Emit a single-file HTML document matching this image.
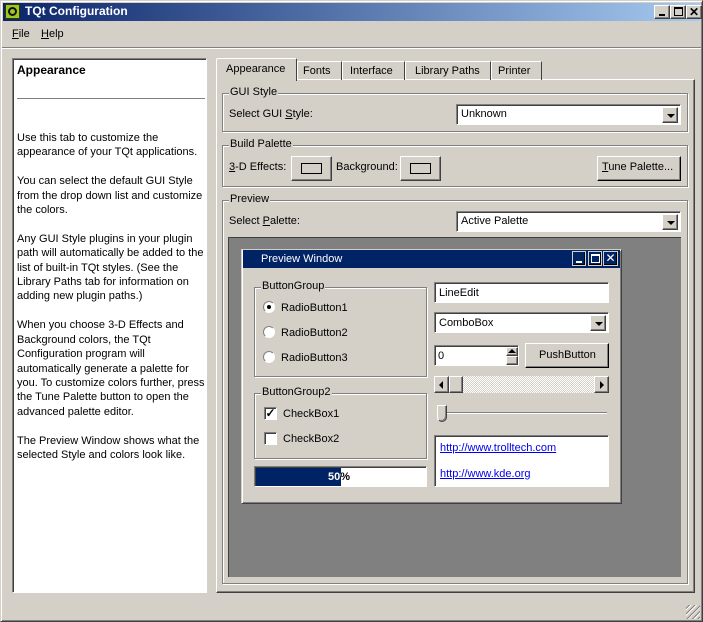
<!DOCTYPE html>
<html><head><meta charset="utf-8"><style>
*{box-sizing:border-box;margin:0;padding:0}
body{width:703px;height:622px;background:#d4d0c8;font-family:"Liberation Sans",sans-serif;font-size:11px;color:#000;position:relative;overflow:hidden}
.a{position:absolute}
.t{position:absolute;white-space:nowrap;line-height:13px}
.sunk{border:1px solid;border-color:#808080 #fff #fff #808080;box-shadow:inset 1px 1px 0 #404040}
.rais{border:1px solid;border-color:#fff #404040 #404040 #fff;box-shadow:inset -1px -1px 0 #808080;background:#d4d0c8}
.grp{position:absolute;border:1px solid #808080;box-shadow:1px 1px 0 #fff,inset 1px 1px 0 #fff}
.grp span{position:absolute;top:-8px;left:6px;background:#d4d0c8;padding:0 1px;line-height:13px}
.cb{position:absolute;background:#fff}
.arrow{position:absolute;right:2px;top:2px;width:16px;height:16px}
.arrow:after{content:"";position:absolute;left:4px;top:6px;border-left:4px solid transparent;border-right:4px solid transparent;border-top:4px solid #000}
u{text-decoration:underline}
</style></head><body>
<div class="a" style="left:0;top:0;width:703px;height:622px;border:1px solid;border-color:#d4d0c8 #404040 #404040 #d4d0c8;box-shadow:inset 1px 1px 0 #fff,inset -1px -1px 0 #808080"></div>
<div class="a" style="left:3px;top:3px;width:697px;height:18px;background:linear-gradient(90deg,#0a246a,#a6caf0)"></div>
<div class="a" style="left:5px;top:4px;width:15px;height:15px;background:#9fc520;border:1px solid #2a3a00"></div>
<div class="a" style="left:8px;top:7px;width:9px;height:9px;border:2px solid #111;border-radius:50%"></div>
<div class="t" style="left:25px;top:5px;color:#fff;font-weight:bold;font-size:12px">TQt Configuration</div>
<div class="rais a" style="left:654px;top:5px;width:16px;height:14px"><div class="a" style="left:4px;top:8px;width:6px;height:2px;background:#000"></div></div>
<div class="rais a" style="left:670px;top:5px;width:16px;height:14px"><div class="a" style="left:3px;top:1px;width:9px;height:9px;border:1px solid #000;border-top-width:2px"></div></div>
<div class="rais a" style="left:686px;top:5px;width:16px;height:14px;text-align:center;font-weight:bold;line-height:12px;font-size:12px">✕</div>
<div class="t" style="left:12px;top:28px"><u>F</u>ile</div>
<div class="t" style="left:41px;top:28px"><u>H</u>elp</div>
<div class="a" style="left:2px;top:47px;width:699px;height:2px;border-top:1px solid #808080;border-bottom:1px solid #fff"></div>

<div class="a sunk" style="left:12px;top:58px;width:195px;height:535px;background:#fff"></div>
<div class="t" style="left:17px;top:64px;font-weight:bold;font-size:12px">Appearance</div>
<div class="a" style="left:17px;top:98px;width:188px;height:1px;background:#808080"></div>
<div class="a" style="left:17px;top:131px;width:195px;line-height:14.4px;white-space:nowrap">
Use this tab to customize the<br>appearance of your TQt applications.<br><br>
You can select the default GUI Style<br>from the drop down list and customize<br>the colors.<br><br>
Any GUI Style plugins in your plugin<br>path will automatically be added to the<br>list of built-in TQt styles. (See the<br>Library Paths tab for information on<br>adding new plugin paths.)<br><br>
When you choose 3-D Effects and<br>Background colors, the TQt<br>Configuration program will<br>automatically generate a palette for<br>you. To customize colors further, press<br>the Tune Palette button to open the<br>advanced palette editor.<br><br>
The Preview Window shows what the<br>selected Style and colors look like.</div>

<div class="a" style="left:216px;top:79px;width:479px;height:514px;border:1px solid;border-color:#fff #404040 #404040 #fff;box-shadow:inset -1px -1px 0 #808080"></div>
<div class="a" style="left:216px;top:58px;width:81px;height:23px;border:1px solid;border-color:#fff #404040 transparent #fff;border-bottom:0;background:#d4d0c8;border-radius:2px 2px 0 0"></div>
<div class="t" style="left:226px;top:63px">Appearance</div>
<div class="a" style="left:297px;top:61px;width:45px;height:19px;border:1px solid;border-color:#fff #404040 transparent #fff;border-bottom:0"></div><div class="t" style="left:303px;top:65px">Fonts</div>
<div class="a" style="left:342px;top:61px;width:63px;height:19px;border:1px solid;border-color:#fff #404040 transparent #fff;border-bottom:0"></div><div class="t" style="left:350px;top:65px">Interface</div>
<div class="a" style="left:405px;top:61px;width:86px;height:19px;border:1px solid;border-color:#fff #404040 transparent #fff;border-bottom:0"></div><div class="t" style="left:415px;top:65px">Library Paths</div>
<div class="a" style="left:491px;top:61px;width:51px;height:19px;border:1px solid;border-color:#fff #404040 transparent #fff;border-bottom:0"></div><div class="t" style="left:498px;top:65px">Printer</div>

<div class="grp" style="left:222px;top:93px;width:466px;height:39px"><span>GUI Style</span></div>
<div class="t" style="left:229px;top:108px">Select GUI <u>S</u>tyle:</div>
<div class="cb sunk" style="left:456px;top:104px;width:225px;height:21px"><div class="t" style="left:4px;top:3px">Unknown</div><div class="arrow rais"></div></div>

<div class="grp" style="left:222px;top:145px;width:466px;height:42px"><span>Build Palette</span></div>
<div class="t" style="left:229px;top:161px"><u>3</u>-D Effects:</div>
<div class="rais a" style="left:291px;top:156px;width:41px;height:25px"><div class="a" style="left:9px;top:6px;width:21px;height:11px;border:1px solid #000"></div></div>
<div class="t" style="left:336px;top:161px">Back<u>g</u>round:</div>
<div class="rais a" style="left:400px;top:156px;width:41px;height:25px"><div class="a" style="left:9px;top:6px;width:21px;height:11px;border:1px solid #000"></div></div>
<div class="rais a" style="left:597px;top:156px;width:84px;height:25px;border-color:#fff #000 #000 #fff"></div>
<div class="t" style="left:602px;top:161px"><u>T</u>une Palette...</div>

<div class="grp" style="left:222px;top:200px;width:466px;height:384px"><span>Preview</span></div>
<div class="t" style="left:229px;top:215px">Select <u>P</u>alette:</div>
<div class="cb sunk" style="left:456px;top:211px;width:225px;height:21px"><div class="t" style="left:4px;top:3px">Active Palette</div><div class="arrow rais"></div></div>
<div class="a" style="left:228px;top:237px;width:453px;height:340px;background:#808080;border-top:1px solid #404040;border-left:1px solid #404040"></div>

<div class="a" style="left:241px;top:249px;width:381px;height:255px;background:#d4d0c8;border:1px solid;border-color:#d4d0c8 #404040 #404040 #d4d0c8;box-shadow:inset 1px 1px 0 #fff,inset -1px -1px 0 #808080"></div>
<div class="a" style="left:243px;top:250px;width:377px;height:18px;background:#002366"></div>
<div class="t" style="left:261px;top:253px;color:#fff">Preview Window</div>
<div class="a" style="left:572px;top:251px;width:14px;height:15px;border:1px solid #d4d0c8;box-shadow:inset -1px -1px 0 #000"><div class="a" style="left:3px;top:9px;width:6px;height:2px;background:#fff"></div></div>
<div class="a" style="left:588px;top:251px;width:14px;height:15px;border:1px solid #d4d0c8;box-shadow:inset -1px -1px 0 #000"><div class="a" style="left:2px;top:2px;width:9px;height:9px;border:1px solid #fff;border-top-width:2px"></div></div>
<div class="a" style="left:603px;top:251px;width:15px;height:15px;border:1px solid #d4d0c8;box-shadow:inset -1px -1px 0 #000;color:#fff;text-align:center;line-height:12px;font-size:12px">✕</div>

<div class="grp" style="left:254px;top:287px;width:173px;height:90px"><span>ButtonGroup</span></div>
<div class="a" style="left:263px;top:301px;width:12px;height:12px;border-radius:50%;background:#fff;border:1px solid;border-color:#808080 #fff #fff #808080"><div class="a" style="left:3px;top:3px;width:4px;height:4px;border-radius:50%;background:#000"></div></div>
<div class="t" style="left:281px;top:302px">RadioButton1</div>
<div class="a" style="left:263px;top:326px;width:12px;height:12px;border-radius:50%;background:#fff;border:1px solid;border-color:#808080 #fff #fff #808080"></div>
<div class="t" style="left:281px;top:327px">RadioButton2</div>
<div class="a" style="left:263px;top:351px;width:12px;height:12px;border-radius:50%;background:#fff;border:1px solid;border-color:#808080 #fff #fff #808080"></div>
<div class="t" style="left:281px;top:352px">RadioButton3</div>

<div class="grp" style="left:254px;top:393px;width:173px;height:66px"><span>ButtonGroup2</span></div>
<div class="a sunk" style="left:264px;top:407px;width:13px;height:13px;background:#fff;font-size:12px;line-height:11px;text-align:center;font-weight:bold">✓</div>
<div class="t" style="left:283px;top:408px">CheckBox1</div>
<div class="a sunk" style="left:264px;top:432px;width:13px;height:13px;background:#fff"></div>
<div class="t" style="left:283px;top:433px">CheckBox2</div>

<div class="a sunk" style="left:254px;top:466px;width:173px;height:21px;background:#fff"><div class="a" style="left:1px;top:1px;width:85px;height:18px;background:#002366"></div><div class="t" style="left:73px;top:4px;font-weight:bold;color:#000">50%</div><div class="t" style="left:73px;top:4px;font-weight:bold;color:#fff;width:13px;overflow:hidden">50%</div></div>

<div class="cb sunk" style="left:434px;top:282px;width:175px;height:21px"><div class="t" style="left:4px;top:4px">LineEdit</div></div>
<div class="cb sunk" style="left:434px;top:312px;width:175px;height:21px"><div class="t" style="left:4px;top:4px">ComboBox</div><div class="arrow rais"></div></div>
<div class="cb sunk" style="left:434px;top:345px;width:85px;height:21px"><div class="t" style="left:3px;top:4px">0</div>
<div class="rais a" style="left:71px;top:1px;width:12px;height:9px"></div><div class="rais a" style="left:71px;top:10px;width:12px;height:9px"></div>
<div class="a" style="left:73px;top:3px;border-left:4px solid transparent;border-right:4px solid transparent;border-bottom:4px solid #000"></div></div>
<div class="rais a" style="left:525px;top:343px;width:84px;height:25px;border-color:#fff #000 #000 #fff"></div>
<div class="t" style="left:539px;top:349px">PushButton</div>
<div class="a" style="left:434px;top:376px;width:175px;height:17px;background:repeating-conic-gradient(#d4d0c8 0 25%,#fff 0 50%) 0 0/2px 2px"></div>
<div class="rais a" style="left:434px;top:376px;width:15px;height:17px"><div class="a" style="left:4px;top:4px;border-top:4px solid transparent;border-bottom:4px solid transparent;border-right:4px solid #000"></div></div>
<div class="rais a" style="left:449px;top:376px;width:14px;height:17px"></div>
<div class="rais a" style="left:594px;top:376px;width:15px;height:17px"><div class="a" style="left:5px;top:4px;border-top:4px solid transparent;border-bottom:4px solid transparent;border-left:4px solid #000"></div></div>
<div class="a" style="left:437px;top:412px;width:170px;height:2px;border-top:1px solid #808080;border-bottom:1px solid #fff"></div>
<div class="rais a" style="left:437px;top:405px;width:10px;height:17px;border-radius:0 0 5px 5px"></div>
<div class="cb sunk" style="left:434px;top:435px;width:175px;height:52px"><div class="t" style="left:5px;top:6px;color:#00e;text-decoration:underline">http://www.trolltech.com</div><div class="t" style="left:5px;top:32px;color:#00e;text-decoration:underline">http://www.kde.org</div></div>
<div class="a" style="left:686px;top:605px;width:14px;height:14px;background:repeating-linear-gradient(135deg,transparent 0 2px,#808080 2px 3px,#fff 3px 4px)"></div>
</body></html>
